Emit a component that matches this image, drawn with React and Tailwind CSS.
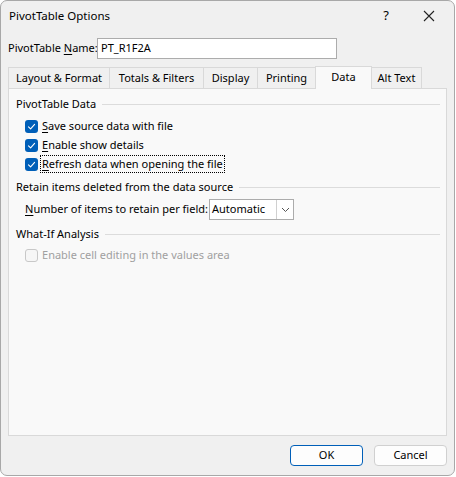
import { useState } from "react";

function CheckMark() {
  return (
    <svg width="9" height="9" viewBox="0 0 9 9" fill="none">
      <path d="M1.5 4.8 L3.6 6.8 L7.6 2.3" stroke="white" strokeWidth="1.1" strokeLinecap="round" strokeLinejoin="round" />
    </svg>
  );
}

function Check({ checked, disabled, focused, label, hot }) {
  const rest = label.slice(1);
  return (
    <div className="flex items-center h-[18px] pl-[16px]">
      {checked ? (
        <div className="w-[13px] h-[13px] rounded-[3px] bg-[#005fb8] flex items-center justify-center">
          <CheckMark />
        </div>
      ) : (
        <div className="w-[13px] h-[13px] rounded-[3px] border border-[#c8c8c8] bg-[#f6f6f6]" />
      )}
      <span
        className={
          "ml-[3px] px-px leading-[16px] whitespace-nowrap " +
          (focused ? "outline outline-1 outline-dotted outline-black " : "") +
          (disabled ? "text-[#a0a0a0]" : "text-black")
        }
      >
        {hot ? <span className="underline underline-offset-2">{label[0]}</span> : label[0]}
        {rest}
      </span>
    </div>
  );
}

function Section({ title }) {
  return (
    <div className="flex items-center h-[18px] pl-[7px] pr-[6px]">
      <span className="text-black whitespace-nowrap">{title}</span>
      <div className="flex-1 h-px bg-[#dcdcdc] ml-[6px]" />
    </div>
  );
}

const tabs = ["Layout & Format", "Totals & Filters", "Display", "Printing", "Data", "Alt Text"];
const tabWidths = [102, 95, 55, 59, 57, 51];

export default function App() {
  const [active, setActive] = useState(4);

  return (
    <div
      className="w-[455px] h-[476px] bg-[#f0f0f0] border border-[#a8a8a8] rounded-[7px] flex flex-col text-[11px] text-black"
      style={{ fontFamily: '"Segoe UI", "Noto Sans", sans-serif' }}
    >
      {/* title bar */}
      <div className="h-[30px] flex items-center pl-[8px] shrink-0 text-[11.5px]">
        <span>PivotTable Options</span>
        <span className="ml-auto w-[20px] text-center text-[13px]">?</span>
        <div className="w-[46px] flex justify-center ml-[10px] mr-[2px]">
          <svg width="12" height="12" viewBox="0 0 12 12">
            <path d="M1 1 L11 11 M11 1 L1 11" stroke="#222" strokeWidth="1.1" />
          </svg>
        </div>
      </div>

      {/* name */}
      <div className="flex items-center pl-[7px] mt-[7px] h-[21px]">
        <span className="w-[89px] shrink-0 whitespace-nowrap">
          PivotTable <span className="underline underline-offset-2">N</span>ame:
        </span>
        <div className="w-[240px] h-[21px] border border-[#acacac] bg-white flex items-center pl-[3px]">
          PT_R1F2A
        </div>
      </div>

      {/* tabs */}
      <div className="flex items-end pl-[7px] mt-[6px] h-[23px]">
        {tabs.map((t, i) => (
          <button
            key={t}
            onClick={() => setActive(i)}
            style={{ width: tabWidths[i] }}
            className={
              i === active
                ? "h-[23px] -mb-px -ml-px bg-[#f9f9f9] border border-b-0 border-[#d9d9d9] z-10 text-center pb-[2px] whitespace-nowrap"
                : "h-[21px] bg-[#f0f0f0] border border-b-0 border-[#d9d9d9] -ml-px first:ml-0 text-center whitespace-nowrap"
            }
          >
            {t}
          </button>
        ))}
      </div>

      {/* panel */}
      <div className="ml-[7px] w-[439px] h-[348px] bg-[#f9f9f9] border border-[#d9d9d9] pt-[6px]">
        <Section title="PivotTable Data" />
        <div className="mt-[4px] flex flex-col gap-px">
          <Check checked hot label="Save source data with file" />
          <Check checked hot label="Enable show details" />
          <Check checked hot focused label="Refresh data when opening the file" />
        </div>
        <div className="mt-[5px]">
          <Section title="Retain items deleted from the data source" />
        </div>
        <div className="flex items-center pl-[16px] mt-[3px] h-[21px]">
          <span className="w-[184px] shrink-0 whitespace-nowrap">
            <span className="underline underline-offset-2">N</span>umber of items to retain per field:
          </span>
          <div className="w-[85px] h-[21px] border border-[#acacac] bg-white flex items-center">
            <span className="pl-[2px] flex-1">Automatic</span>
            <div className="w-[17px] h-[19px] border-l border-[#d0d0d0] flex items-center justify-center">
              <svg width="9" height="6" viewBox="0 0 9 6">
                <path d="M1 1 L4.5 4.5 L8 1" stroke="#555" strokeWidth="1" fill="none" />
              </svg>
            </div>
          </div>
        </div>
        <div className="mt-[5px]">
          <Section title="What-If Analysis" />
        </div>
        <div className="mt-[3px]">
          <Check disabled label="Enable cell editing in the values area" />
        </div>
      </div>

      {/* buttons */}
      <div className="flex justify-end gap-[11px] pr-[7px] mt-[9px]">
        <button className="w-[73px] h-[21px] bg-[#fdfdfd] border border-[#005fb8] rounded-[4px]">OK</button>
        <button className="w-[73px] h-[21px] bg-[#fdfdfd] border border-[#d0d0d0] rounded-[4px]">Cancel</button>
      </div>
    </div>
  );
}
